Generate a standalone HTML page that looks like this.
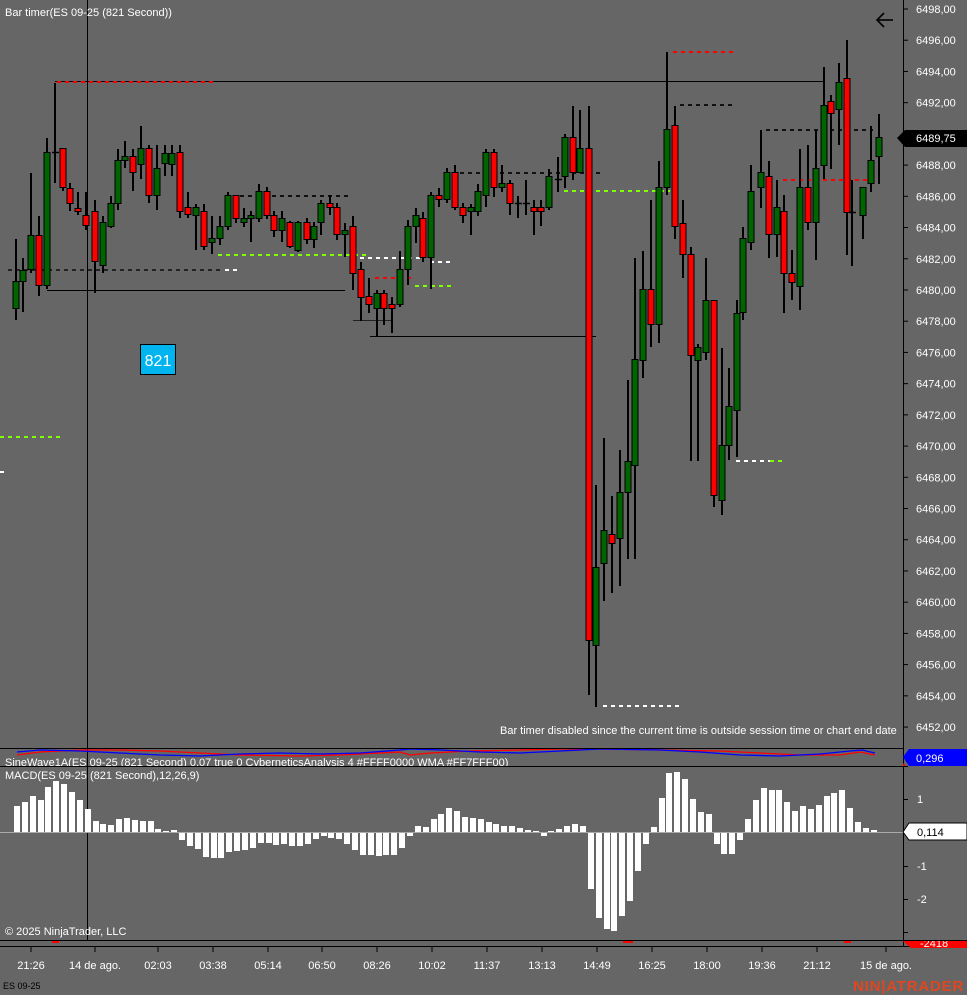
<!DOCTYPE html>
<html><head><meta charset="utf-8">
<style>
html,body{margin:0;padding:0;background:#666;}
svg{display:block;font-family:"Liberation Sans",sans-serif;}
</style></head>
<body>
<svg id="s" width="967" height="995" viewBox="0 0 967 995" xmlns="http://www.w3.org/2000/svg">
<rect width="967" height="995" fill="#666"/>
<g id="lines">
  <line x1="87.5" y1="0" x2="87.5" y2="940" stroke="#000" stroke-width="1"/>
  <line x1="55" y1="81.5" x2="825" y2="81.5" stroke="#000"/>
  <line x1="47" y1="290.5" x2="345" y2="290.5" stroke="#000"/>
  <line x1="370" y1="336.5" x2="596" y2="336.5" stroke="#000"/>
  <line x1="353" y1="320.5" x2="392" y2="320.5" stroke="#222"/>
  <g stroke-width="2" stroke-dasharray="4,4">
    <line x1="57" y1="82" x2="215" y2="82" stroke="#f00"/>
    <line x1="673" y1="52" x2="733" y2="52" stroke="#f00"/>
    <line x1="680" y1="105" x2="733" y2="105" stroke="#111"/>
    <line x1="240" y1="196" x2="348" y2="196" stroke="#111"/>
    <line x1="8" y1="270" x2="220" y2="270" stroke="#222"/>
    <line x1="225" y1="270" x2="240" y2="270" stroke="#fff"/>
    <line x1="218" y1="255" x2="370" y2="255" stroke="#7fff00"/>
    <line x1="352" y1="258" x2="420" y2="258" stroke="#fff"/>
    <line x1="430" y1="262" x2="452" y2="262" stroke="#fff"/>
    <line x1="375" y1="278" x2="411" y2="278" stroke="#f00"/>
    <line x1="415" y1="286" x2="452" y2="286" stroke="#7fff00"/>
    <line x1="460" y1="173" x2="600" y2="173" stroke="#111"/>
    <line x1="564" y1="191" x2="670" y2="191" stroke="#7fff00"/>
    <line x1="766" y1="130" x2="873" y2="130" stroke="#111"/>
    <line x1="783" y1="180" x2="873" y2="180" stroke="#f00"/>
    <line x1="603" y1="706" x2="680" y2="706" stroke="#fff"/>
    <line x1="736" y1="461" x2="770" y2="461" stroke="#fff"/>
    <line x1="770" y1="461" x2="782" y2="461" stroke="#7fff00"/>
    <line x1="0" y1="437" x2="60" y2="437" stroke="#7fff00"/>
  </g>
  <line x1="0" y1="472" x2="4" y2="472" stroke="#fff" stroke-width="2"/>
</g>
<g id="candles"></g>
<g id="macd"></g>

<text x="5" y="16" fill="#fff" font-size="11">Bar timer(ES 09-25 (821 Second))</text>
<text x="500" y="734" fill="#fff" font-size="11">Bar timer disabled since the current time is outside session time or chart end date</text>
<g stroke="#000" stroke-width="1.6" fill="none">
  <line x1="877" y1="20" x2="893" y2="20"/>
  <polyline points="884,13 877,20 884,27"/>
</g>
<rect x="140.5" y="344.5" width="35" height="30" fill="#00b4f0" stroke="#000"/>
<text x="158" y="366" fill="#fff" font-size="16" text-anchor="middle">821</text>

<line x1="0" y1="748.5" x2="903" y2="748.5" stroke="#000"/>
<line x1="0" y1="766.5" x2="903" y2="766.5" stroke="#000"/>
<line x1="0" y1="940.5" x2="967" y2="940.5" stroke="#000"/>
<line x1="0" y1="946.5" x2="967" y2="946.5" stroke="#000"/>
<rect x="52" y="941" width="7" height="2" fill="#f00"/>
<rect x="623" y="941" width="10" height="2" fill="#f00"/>
<rect x="844" y="941" width="7" height="2" fill="#f00"/>

<svg x="0" y="749" width="903" height="17" overflow="hidden">
  <polyline fill="none" stroke="#f00" stroke-width="1.3" points="17,6 40,3 80,1 120,1 160,2 200,4 240,6 300,7 340,6 380,4 400,3 410,6 430,4 470,2 520,1 560,0 600,0 660,1 720,2 760,4 800,6 840,6 860,3 875,6"/>
  <polyline fill="none" stroke="#00f" stroke-width="1.3" points="17,3 40,1 80,2 120,4 160,6 200,7 240,5 280,4 320,5 360,4 400,1 410,0 440,1 480,3 520,4 560,2 600,0 660,1 700,3 740,6 780,7 820,5 850,2 862,1 875,4"/>
  <text x="5" y="17" fill="#fff" font-size="11">SineWave1A(ES 09-25 (821 Second) 0,07 true 0 CyberneticsAnalysis 4 #FFFF0000 WMA #FF7FFF00)</text>
</svg>

<line x1="0" y1="832.5" x2="903" y2="832.5" stroke="#aaa"/>
<text x="5" y="779" fill="#fff" font-size="11">MACD(ES 09-25 (821 Second),12,26,9)</text>
<text x="5" y="935" fill="#fff" font-size="11">© 2025 NinjaTrader, LLC</text>

<line x1="903.5" y1="0" x2="903.5" y2="946" stroke="#000"/>
<g id="axis" fill="#fff" font-size="11"></g>
<g fill="#fff" font-size="11">
  <text x="917" y="803">1</text>
  <text x="917" y="870">-1</text>
  <text x="917" y="903">-2</text>
</g>
<g stroke="#000">
  <line x1="903" y1="766.5" x2="908" y2="766.5"/>
  <line x1="903" y1="799.5" x2="908" y2="799.5"/>
  <line x1="903" y1="866.5" x2="908" y2="866.5"/>
  <line x1="903" y1="899.5" x2="908" y2="899.5"/>
  <line x1="903" y1="932.5" x2="908" y2="932.5"/>
</g>
<polygon points="897,138 905,130 967,130 967,147 905,147" fill="#000"/>
<text x="916" y="142" fill="#fff" font-size="11">6489,75</text>
<polygon points="903,757 909,749 967,749 967,766 909,766" fill="#00f"/>
<polygon points="903,763 906,766 903,766" fill="#f00"/>
<text x="916" y="762" fill="#fff" font-size="11">0,296</text>
<polygon points="903,832 909,823 967,823 967,840 909,840" fill="#fff" stroke="#000"/>
<text x="917" y="836" fill="#000" font-size="11">0,114</text>
<polygon points="903,941 909,941 967,941 967,948 911,948" fill="#f00"/>
<svg x="903" y="941" width="64" height="7" overflow="hidden"><text x="17" y="6" fill="#fff" font-size="11">-2418</text></svg>

<g id="time" fill="#fff" font-size="11"></g>
<text x="3" y="989" fill="#000" font-size="9">ES 09-25</text>
<text x="853" y="991" fill="#e2461e" font-size="15" font-weight="bold" letter-spacing="0.8">NIN|ATRADER</text>
</svg>
<script>
var NS="http://www.w3.org/2000/svg";
function el(p,t,a,txt){var e=document.createElementNS(NS,t);for(var k in a)e.setAttribute(k,a[k]);if(txt!=null)e.textContent=txt;p.appendChild(e);return e;}
var C=[
[16,239,320,281,308,'g'],[23,258,312,270,281,'g'],[31,173,273,235,269,'g'],[39,216,296,235,285,'r'],
[47,138,289,152,285,'g'],[55,83,183,152,153,'d'],[63,148,191,148,187,'r'],[70,183,211,188,203,'r'],
[78,192,215,208,211,'r'],[86,192,230,215,225,'r'],[95,200,293,211,261,'r'],[103,216,273,222,265,'g'],
[111,196,228,203,226,'g'],[118,149,210,160,203,'g'],[125,141,168,156,160,'g'],[133,149,191,156,172,'r'],
[141,126,179,148,164,'g'],[149,145,203,148,195,'r'],[157,145,210,168,195,'g'],[165,145,176,153,163,'g'],
[172,145,176,153,164,'g'],[180,145,218,152,211,'r'],[188,192,218,207,214,'r'],[196,204,250,207,215,'g'],
[204,204,250,211,246,'r'],[212,216,254,238,242,'g'],[220,216,245,226,238,'g'],[228,192,230,195,226,'g'],
[236,195,223,195,218,'r'],[244,208,227,218,222,'g'],[251,211,242,215,218,'g'],[259,184,222,191,218,'g'],
[267,187,219,191,215,'r'],[274,211,237,215,230,'r'],[282,211,242,218,230,'g'],[290,221,248,222,246,'r'],
[298,221,252,222,250,'g'],[307,218,244,222,239,'r'],[314,222,248,226,239,'g'],[321,200,235,203,222,'g'],
[330,195,215,203,207,'r'],[337,203,240,207,234,'r'],[345,223,257,230,234,'g'],[353,216,290,226,273,'r'],
[361,262,321,269,297,'r'],[369,278,313,296,304,'r'],[377,290,336,293,308,'g'],[384,290,325,293,308,'r'],
[392,297,333,304,308,'r'],[400,251,307,269,304,'g'],[408,220,285,226,269,'g'],[416,208,243,215,226,'g'],
[423,212,262,218,257,'r'],[431,192,289,195,257,'g'],[439,188,207,195,199,'r'],[447,168,203,172,199,'g'],
[455,165,210,172,207,'r'],[463,203,223,207,215,'r'],[471,204,235,207,211,'g'],[478,184,216,191,211,'g'],
[486,149,207,152,195,'g'],[494,149,197,152,187,'r'],[502,165,192,183,187,'g'],[510,180,215,183,203,'r'],
[518,196,218,203,204,'d'],[526,180,215,203,204,'d'],[534,200,235,207,211,'r'],[541,200,226,207,211,'r'],
[549,169,210,176,207,'g'],[558,157,192,179,180,'d'],[565,134,188,137,176,'g'],[573,106,180,137,172,'r'],
[580,110,172,148,172,'g'],[589,106,695,148,640,'r'],[596,485,707,567,645,'g'],[604,438,601,530,563,'g'],
[612,496,593,534,543,'r'],[620,450,586,492,538,'g'],[628,380,559,461,492,'g'],[635,258,559,359,465,'g'],
[643,251,378,289,360,'g'],[651,200,347,289,324,'r'],[659,161,343,187,324,'g'],[667,52,195,129,187,'g'],
[675,106,239,125,226,'r'],[683,200,278,223,254,'r'],[691,247,461,254,355,'r'],[698,344,461,347,360,'g'],
[706,258,360,300,352,'g'],[714,300,507,300,495,'r'],[722,348,515,445,500,'g'],[729,368,460,406,445,'g'],
[737,300,457,313,410,'g'],[743,227,320,238,312,'g'],[751,165,250,191,242,'g'],[761,130,208,172,187,'g'],
[769,161,258,176,234,'r'],[777,180,257,207,234,'g'],[784,195,313,211,273,'r'],[792,250,300,273,282,'r'],
[800,149,310,187,286,'g'],[808,145,230,187,222,'r'],[816,130,260,168,222,'g'],[824,67,179,105,165,'g'],
[831,95,169,101,113,'r'],[839,63,145,82,109,'g'],[847,40,255,78,212,'r'],[852,180,266,212,213,'d'],
[863,187,239,187,215,'g'],[871,126,192,160,183,'g'],[879,114,184,137,156,'g']];
var cg=document.getElementById('candles');
C.forEach(function(c){
  el(cg,'line',{x1:c[0],y1:c[1],x2:c[0],y2:c[2],stroke:'#000','stroke-width':2});
  if(c[5]=='d'){el(cg,'line',{x1:c[0]-3,y1:c[3]+0.5,x2:c[0]+4,y2:c[3]+0.5,stroke:'#000','stroke-width':1.5});}
  else el(cg,'rect',{x:c[0]-3,y:c[3]+0.5,width:6,height:Math.max(2,c[4]-c[3]),fill:c[5]=='g'?'#006400':'#ff0000',stroke:'#000','stroke-width':1});
});
var M=[806,802,796,800,787,781,784,792,800,809,821,824,825,819,818,820,821,821,829,831,830,839,845,848,856,857,857,851,850,849,847,842,842,844,843,845,845,843,838,835,837,838,843,849,854,854,855,854,854,847,835,826,827,819,814,808,811,817,818,819,822,824,826,826,828,830,831,835,831,829,826,824,826,888,917,928,930,915,900,870,843,827,798,773,772,779,799,812,814,843,853,853,839,819,800,788,790,790,802,811,806,809,805,796,793,790,808,822,828,830];
var mg=document.getElementById('macd');
M.forEach(function(v,i){var x=Math.round(14+7.86*i);var y0=832;
  if(v<y0)el(mg,'rect',{x:x,y:v,width:6,height:y0-v,fill:'#fff'});
  else el(mg,'rect',{x:x,y:y0+1,width:6,height:v-y0,fill:'#fff'});
});
var ax=document.getElementById('axis');
for(var i=0;i<=23;i++){var p=6498-2*i;var y=9+i*31.22;
  el(ax,'text',{x:916,y:(y+4).toFixed(1)},p+',00');
  el(ax,'line',{x1:903,y1:y,x2:908,y2:y,stroke:'#000'});
}
var T=[[31,'21:26'],[95,'14 de ago.'],[158,'02:03'],[213,'03:38'],[268,'05:14'],[322,'06:50'],[377,'08:26'],[432,'10:02'],[487,'11:37'],[542,'13:13'],[597,'14:49'],[652,'16:25'],[707,'18:00'],[762,'19:36'],[817,'21:12'],[886,'15 de ago.']];
var tg=document.getElementById('time');
T.forEach(function(t){
  el(tg,'line',{x1:t[0],y1:947,x2:t[0],y2:952,stroke:'#000'});
  el(tg,'text',{x:t[0],y:969,'text-anchor':'middle'},t[1]);
});
</script>
</body></html>
